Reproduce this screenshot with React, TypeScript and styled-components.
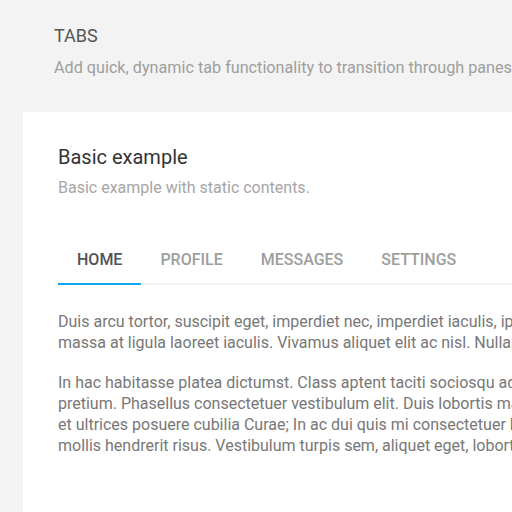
import styled, { createGlobalStyle } from 'styled-components';

const GlobalStyle = createGlobalStyle`
  body {
    margin: 0;
    background: #f3f3f3;
    font-family: Roboto, "Liberation Sans", sans-serif;
    overflow: hidden;
  }
`;

const Page = styled.div`
  width: 1100px;
  padding: 24px 0 0 23px;
`;

const Header = styled.header`
  padding: 0 31px;
`;

const PageTitle = styled.h1`
  margin: 0;
  font-size: 18px;
  line-height: 24px;
  font-weight: 400;
  color: #555;
`;

const PageSub = styled.p`
  margin: 9px 0 0;
  font-size: 16.2px;
  line-height: 21px;
  color: #9e9e9e;
`;

const Card = styled.section`
  margin-top: 34px;
  background: #fff;
  border-radius: 2px;
  padding: 32px 35px 60px;
`;

const CardTitle = styled.h2`
  margin: 0;
  font-size: 20px;
  line-height: 26px;
  font-weight: 400;
  color: #333;
`;

const CardDesc = styled.p`
  margin: 7px 0 0;
  font-size: 16px;
  line-height: 21px;
  color: #a6a6a6;
`;

const TabList = styled.nav`
  display: flex;
  margin-top: 38px;
  border-bottom: 2px solid #f3f3f3;
`;

const Tab = styled.button<{ $active?: boolean }>`
  padding: 13px 19px;
  margin-bottom: -2px;
  border: 0;
  border-bottom: 2px solid ${(p) => (p.$active ? '#13a4ee' : 'transparent')};
  background: none;
  font-family: inherit;
  font-size: 16px;
  line-height: 21px;
  font-weight: 500;
  text-transform: uppercase;
  color: ${(p) => (p.$active ? '#4f5358' : '#9e9e9e')};
  cursor: pointer;
`;

const Pane = styled.div`
  margin-top: 26px;
`;

const Para = styled.p`
  margin: 0 0 19px;
  font-size: 16px;
  line-height: 21px;
  color: #777;
  white-space: nowrap;
`;

const tabs = ['Home', 'Profile', 'Messages', 'Settings'];

export default function App() {
  return (
    <Page>
      <GlobalStyle />
      <Header>
        <PageTitle>TABS</PageTitle>
        <PageSub>Add quick, dynamic tab functionality to transition through panes of local content</PageSub>
      </Header>
      <Card>
        <CardTitle>Basic example</CardTitle>
        <CardDesc>Basic example with static contents.</CardDesc>
        <TabList>
          {tabs.map((t, i) => (
            <Tab key={t} $active={i === 0}>
              {t}
            </Tab>
          ))}
        </TabList>
        <Pane>
          <Para>
            Duis arcu tortor, suscipit eget, imperdiet nec, imperdiet iaculis, ipsum. Sed aliquam ultrices mauris. Integer ante arcu,
            <br />
            massa at ligula laoreet iaculis. Vivamus aliquet elit ac nisl. Nullam quis ante. Etiam sit amet orci eget eros faucibus.
          </Para>
          <Para>
            In hac habitasse platea dictumst. Class aptent taciti sociosqu ad litora torquent per conubia nostra, per inceptos
            <br />
            pretium. Phasellus consectetuer vestibulum elit. Duis lobortis massa imperdiet quam. Vestibulum ante ipsum primis in
            <br />
            et ultrices posuere cubilia Curae; In ac dui quis mi consectetuer lacinia. Nam pretium turpis et arcu. Duis arcu
            <br />
            mollis hendrerit risus. Vestibulum turpis sem, aliquet eget, lobortis pellentesque, rutrum eu, nisl.
          </Para>
        </Pane>
      </Card>
    </Page>
  );
}
